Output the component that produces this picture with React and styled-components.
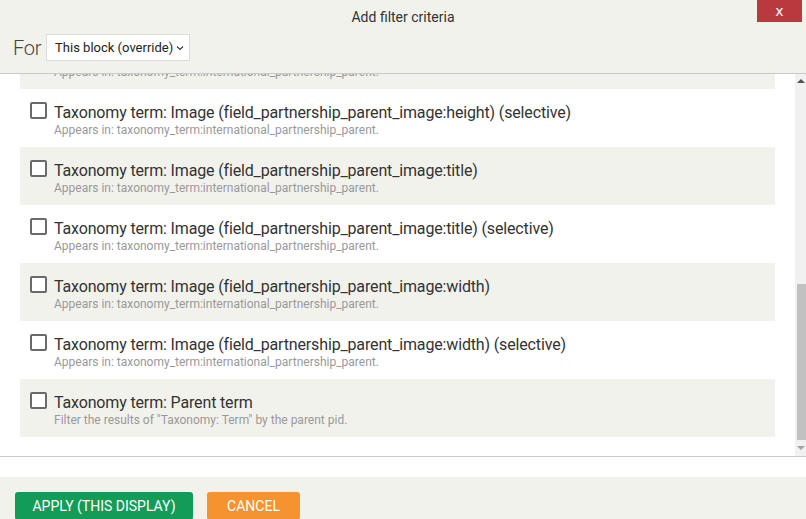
import React, { useLayoutEffect, useRef } from "react";
import styled, { createGlobalStyle } from "styled-components";

const GlobalStyle = createGlobalStyle`
  html, body {
    margin: 0;
    padding: 0;
    overflow: hidden;
    background: #fff;
    font-family: Roboto, "Liberation Sans", Arial, sans-serif;
  }
`;

const Dialog = styled.div`
  width: 806px;
  display: flex;
  flex-direction: column;
`;

const Header = styled.div`
  background: #f2f2ed;
  height: 73px;
  border-bottom: 1px solid #c9c9c9;
  display: flex;
  flex-direction: column;
  position: relative;
`;

const Title = styled.div`
  text-align: center;
  font-size: 14px;
  color: #333;
  line-height: 18px;
  padding-top: 8px;
`;

const CloseButton = styled.button`
  position: absolute;
  top: 0;
  right: 4px;
  width: 45px;
  height: 22px;
  border: none;
  background: #b9393e;
  color: #fff;
  font-family: "DejaVu Sans", sans-serif;
  font-size: 14px;
  padding: 0;
  line-height: 22px;
`;

const ForRow = styled.div`
  display: flex;
  align-items: center;
  gap: 5px;
  padding: 8px 0 0 13px;
`;

const ForLabel = styled.span`
  font-size: 20px;
  font-weight: 300;
  color: #444;
  letter-spacing: -0.3px;
`;

const Select = styled.div`
  height: 27px;
  box-sizing: border-box;
  width: 144px;
  background: #fff;
  border: 1px solid #dcdcdc;
  display: flex;
  align-items: center;
  gap: 3px;
  padding-left: 8px;
  font-size: 13px;
  color: #222;
`;

const ScrollArea = styled.div`
  height: 382px;
  display: flex;
  background: #fff;
`;

const Viewport = styled.div`
  flex: 1;
  overflow: hidden;
`;

const ScrollBar = styled.div`
  width: 11px;
  background: #f1f1f1;
  display: flex;
  flex-direction: column;
`;

const Arrow = styled.div`
  height: ${(p) => (p.$down ? "16px" : "14px")};
  display: flex;
  align-items: center;
  justify-content: center;

  &::before {
    content: "";
    width: 0;
    height: 0;
    border-left: 4px solid transparent;
    border-right: 4px solid transparent;
    ${(p) =>
      p.$down
        ? "border-top: 4px solid #a3a3a3;"
        : "border-bottom: 4px solid #505050;"}
  }
`;

const Track = styled.div`
  flex: 1;
  display: flex;
  flex-direction: column;
  justify-content: flex-end;
`;

const Thumb = styled.div`
  height: 156px;
  margin-left: 2px;
  background: #c1c1c1;
`;

const List = styled.div`
  padding: 20px 20px 19px 20px;
`;

const Row = styled.label`
  display: flex;
  gap: 7px;
  height: 58px;
  box-sizing: border-box;
  padding: 13px 10px 0 10px;
  background: ${(p) => (p.$shaded ? "#f2f2ed" : "#fff")};
`;

const Box = styled.span`
  flex: none;
  width: 13px;
  height: 13px;
  border: 2px solid #6a6a6a;
  border-radius: 2px;
  background: #fff;
`;

const Texts = styled.div`
  display: flex;
  flex-direction: column;
  margin-top: 1px;
`;

const ItemTitle = styled.span`
  font-size: 16px;
  line-height: 20px;
  color: #333;
  letter-spacing: -0.15px;
`;

const ItemDesc = styled.span`
  font-size: 12px;
  line-height: 14px;
  color: #999;
`;

const Divider = styled.div`
  border-top: 1px solid #c9c9c9;
  height: 20px;
  background: #fff;
`;

const Footer = styled.div`
  background: #f2f2ed;
  padding: 15px 15px;
  display: flex;
  gap: 14px;
`;

const Button = styled.button`
  border: none;
  border-radius: 3px;
  height: 28px;
  width: ${(p) => p.$w};
  padding: 0;
  font-family: Roboto, sans-serif;
  font-size: 14px;
  color: #fff;
  text-transform: uppercase;
  background: ${(p) => p.$bg};
`;

const appears = "Appears in: taxonomy_term:international_partnership_parent.";

const items = [
  ["Taxonomy term: Description", appears],
  ["Taxonomy term: Description (selective)", appears],
  ["Taxonomy term: Image (field_partnership_parent_image)", appears],
  ["Taxonomy term: Image (field_partnership_parent_image:alt)", appears],
  ["Taxonomy term: Image (field_partnership_parent_image:alt) (selective)", appears],
  ["Taxonomy term: Image (field_partnership_parent_image:fid)", appears],
  ["Taxonomy term: Image (field_partnership_parent_image:fid) (selective)", appears],
  ["Taxonomy term: Image (field_partnership_parent_image:height)", appears],
  ["Taxonomy term: Image (field_partnership_parent_image:height) (selective)", appears],
  ["Taxonomy term: Image (field_partnership_parent_image:title)", appears],
  ["Taxonomy term: Image (field_partnership_parent_image:title) (selective)", appears],
  ["Taxonomy term: Image (field_partnership_parent_image:width)", appears],
  ["Taxonomy term: Image (field_partnership_parent_image:width) (selective)", appears],
  ["Taxonomy term: Parent term", 'Filter the results of "Taxonomy: Term" by the parent pid.'],
];

const App = () => {
  const scrollRef = useRef(null);

  useLayoutEffect(() => {
    const el = scrollRef.current;
    if (el) el.scrollTop = el.scrollHeight;
  }, []);

  return (
    <>
      <GlobalStyle />
      <Dialog>
        <Header>
          <Title>Add filter criteria</Title>
          <CloseButton>x</CloseButton>
          <ForRow>
            <ForLabel>For</ForLabel>
            <Select>
              This block (override)
              <svg width="8" height="6" viewBox="0 0 8 6">
                <path d="M1 1.5 L4 4.5 L7 1.5" fill="none" stroke="#333" strokeWidth="1.1" />
              </svg>
            </Select>
          </ForRow>
        </Header>
        <ScrollArea>
          <Viewport ref={scrollRef}>
            <List>
              {items.map(([title, desc], i) => (
                <Row key={title} $shaded={i % 2 === 1}>
                  <Box />
                  <Texts>
                    <ItemTitle>{title}</ItemTitle>
                    <ItemDesc>{desc}</ItemDesc>
                  </Texts>
                </Row>
              ))}
            </List>
          </Viewport>
          <ScrollBar>
            <Arrow />
            <Track>
              <Thumb />
            </Track>
            <Arrow $down />
          </ScrollBar>
        </ScrollArea>
        <Divider />
        <Footer>
          <Button $bg="#139c57" $w="178px">Apply (this display)</Button>
          <Button $bg="#f59331" $w="93px">Cancel</Button>
        </Footer>
      </Dialog>
    </>
  );
};

export default App;
